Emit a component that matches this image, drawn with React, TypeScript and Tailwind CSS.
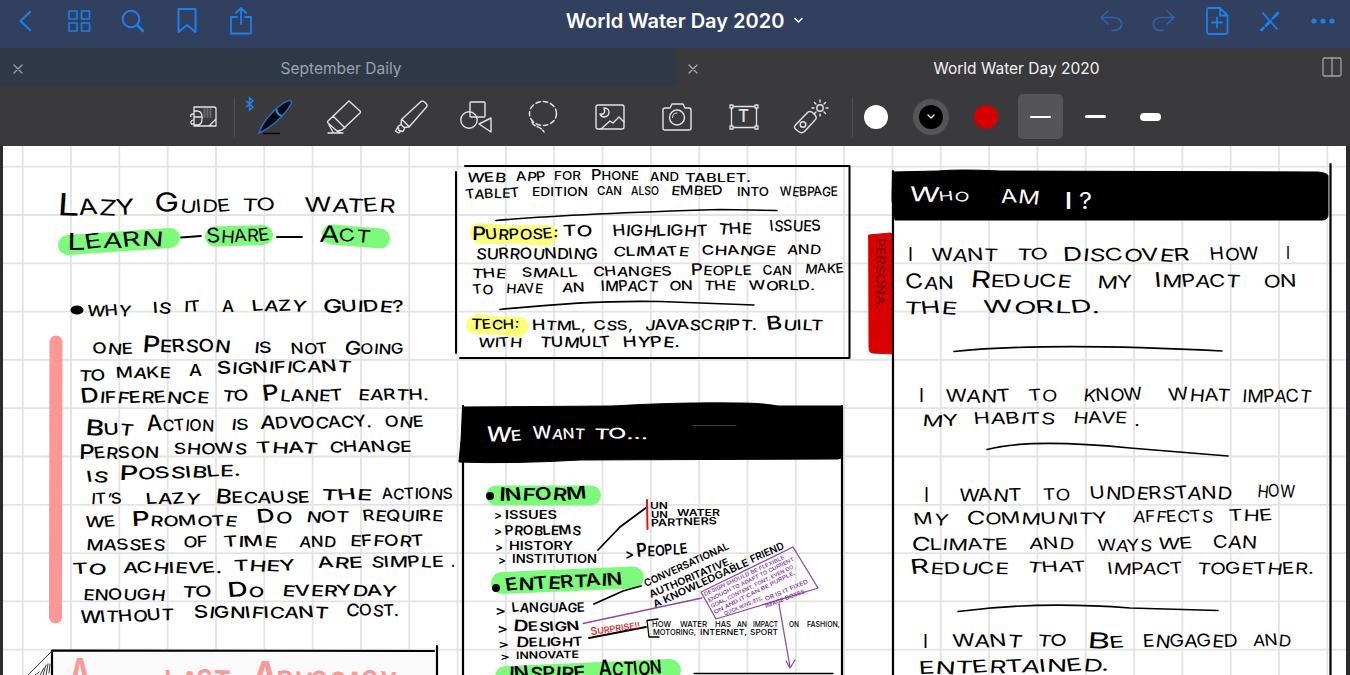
import React from "react";

type Ink = [text: string, x: number, y: number, width: number, cap?: number, capFirst?: number, angle?: number];

const GUIDE: Ink[] = [
  ["LAZY", 57, 215, 78, 15, 21], ["GUIDE", 155, 212, 76, 12, 18], ["TO", 242, 211, 34, 12, 12], ["WATER", 305, 212, 90, 13, 14],
];
const MOTTO: Ink[] = [
  ["LEARN", 67, 250, 96, 14, 16, -3], ["SHARE", 207, 243, 63, 12, 14, -2], ["ACT", 319, 242, 51, 12, 16],
];
const WHY: Ink[] = [
  ["WHY", 87, 316, 44], ["IS", 153, 313, 18], ["IT", 184, 312, 17], ["A", 222, 312, 12], ["LAZY", 252, 311, 54],
  ["GUIDE?", 322, 312, 82, 11, 13],
  ["ONE", 93, 354, 40], ["PERSON", 142, 352, 88, 12, 16], ["IS", 254, 353, 18], ["NOT", 291, 354, 37], ["GOING", 344, 354, 60, 10, 13],
  ["TO", 79, 381, 27], ["MAKE", 116, 378, 55], ["A", 189, 376, 13], ["SIGNIFICANT", 217, 374, 134, 11, 12, -1],
  ["DIFFERENCE", 81, 403, 128, 11, 14], ["TO", 222, 401, 27], ["PLANET", 263, 401, 80, 11, 15], ["EARTH.", 358, 400, 71],
  ["BUT", 85, 435, 48, 11, 15], ["ACTION", 147, 431, 67, 11, 15], ["IS", 231, 430, 18], ["ADVOCACY.", 260, 429, 112, 11, 13, -1], ["ONE", 385, 427, 39],
  ["PERSON", 79, 459, 80, 11, 14, -1], ["SHOWS", 174, 454, 73], ["THAT", 257, 453, 60], ["CHANGE", 329, 452, 83],
  ["IS", 87, 482, 21], ["POSSIBLE.", 119, 480, 122, 11, 14, -2],
  ["IT’S", 91, 504, 31], ["LAZY", 146, 504, 54], ["BECAUSE", 215, 503, 95, 11, 14], ["THE", 321, 500, 51], ["ACTIONS", 382, 499, 71],
  ["WE", 85, 527, 31], ["PROMOTE", 132, 526, 105, 10, 14], ["DO", 257, 523, 35, 11, 13], ["NOT", 306, 522, 43], ["REQUIRE", 363, 521, 80],
  ["MASSES", 86, 550, 79], ["OF", 183, 547, 25], ["TIME", 224, 547, 53], ["AND", 299, 547, 37], ["EFFORT", 350, 546, 74],
  ["TO", 73, 574, 33], ["ACHIEVE.", 123, 573, 99], ["THEY", 234, 571, 62], ["ARE", 318, 568, 45], ["SIMPLE", 371, 567, 73], [".", 451, 567, 4],
  ["ENOUGH", 83, 600, 82], ["TO", 182, 597, 30], ["DO", 228, 597, 36, 10, 14], ["EVERYDAY", 282, 596, 114],
  ["WITHOUT", 80, 623, 94, 11, 12, -2], ["SIGNIFICANT", 194, 618, 134, 11, 12], ["COST.", 346, 616, 53, 11, 12],
];
const PRODUCT: Ink[] = [
  ["WEB", 467, 182, 39, 9], ["APP", 516, 181, 30, 9], ["FOR", 554, 180, 27, 8], ["PHONE", 591, 180, 48, 8, 10], ["AND", 650, 181, 29, 8], ["TABLET.", 685, 182, 66, 8],
  ["TABLET", 466, 199, 54, 9, 9, -2], ["EDITION", 532, 196, 56, 8], ["CAN", 597, 195, 25, 8], ["ALSO", 631, 195, 28, 8], ["EMBED", 671, 195, 52, 9], ["INTO", 737, 196, 32, 8], ["WEBPAGE", 780, 196, 58, 9],
  ["PURPOSE:", 472, 240, 86, 10, 13, -1], ["TO", 563, 236, 29], ["HIGHLIGHT", 613, 236, 95], ["THE", 718, 234, 34], ["ISSUES", 770, 231, 51],
  ["SURROUNDING", 476, 259, 122], ["CLIMATE", 613, 256, 76, 9], ["CHANGE", 702, 255, 74, 9], ["AND", 787, 254, 34, 9],
  ["THE", 472, 278, 34, 9], ["SMALL", 522, 277, 56, 9], ["CHANGES", 593, 276, 79, 9], ["PEOPLE", 691, 275, 61, 9, 11], ["CAN", 763, 275, 29, 9], ["MAKE", 805, 273, 39, 9],
  ["TO", 473, 294, 20, 9], ["HAVE", 506, 293, 37, 9], ["AN", 562, 292, 23, 9], ["IMPACT", 601, 291, 57, 10], ["ON", 669, 290, 24, 9], ["THE", 704, 290, 32, 9], ["WORLD.", 749, 290, 66, 9],
  ["TECH:", 471, 329, 48, 9, 10], ["HTML,", 532, 330, 54, 9, 10], ["CSS,", 594, 330, 39, 9], ["JAVASCRIPT.", 645, 330, 112, 10], ["BUILT", 767, 330, 56, 10, 13],
  ["WITH", 478, 347, 44, 9], ["TUMULT", 540, 347, 71, 10], ["HYPE.", 623, 347, 57, 10],
];
const GOALS: Ink[] = [
  ["INFORM", 499, 501, 88, 12, 13, -1],
  [">", 494, 519, 8, 8], ["ISSUES", 505, 519, 52, 8], [">", 494, 535, 8, 8], ["PROBLEMS", 505, 535, 76, 9],
  [">", 495, 551, 8, 8], ["HISTORY", 509, 550, 64, 8], [">", 498, 564, 8, 8], ["INSTITUTION", 512, 563, 85, 8],
  ["UN", 650, 509, 18, 6.5], ["UN", 651, 517.5, 17, 6], ["WATER", 677, 516, 43, 6.5], ["PARTNERS", 651, 526.5, 66, 7, 7, -2],
  [">", 625, 559, 9, 10], ["PEOPLE", 637, 557, 51, 10, 13, -4],
  ["ENTERTAIN", 506, 591, 117, 12, 12, -3],
  [">", 495, 615, 11, 9], ["LANGUAGE", 512, 612, 73, 9], [">", 497, 633, 11, 9], ["DESIGN", 513, 631, 67, 9, 11],
  [">", 498, 647.5, 11, 8], ["DELIGHT", 516, 647, 67, 8.5, 10, -1], [">", 500, 660, 10, 7], ["INNOVATE", 516, 659, 63, 7, 7, -1],
  ["INSPIRE", 509, 679, 77, 12], ["ACTION", 599, 676, 63, 13, 15, -2],
  ["CONVERSATIONAL", 646, 587, 92, 7, 7, -24.6], ["AUTHORITATIVE.", 651, 598, 89, 7, 7, -23], ["A KNOWLEDGABLE", 655, 608, 104, 7, 7, -24.5], ["FRIEND", 752, 563, 36, 7, 7, -24],
];
const DELIGHT: Ink[] = [
  ["HOW", 652, 627, 19, 5], ["WATER", 680, 627, 27, 5], ["HAS", 715, 627, 16, 5], ["AN", 737, 627, 10, 5], ["IMPACT", 753, 627, 25, 5], ["ON", 789, 627, 10, 5], ["FASHION,", 807, 627, 33, 5],
  ["MOTORING,", 653, 635, 43, 5], ["INTERNET,", 700, 635, 47, 5], ["SPORT", 750, 635, 28, 5],
];
const NOTE: Ink[] = [
  ["DESIGN SHOULD BE FLEXIBLE", 705, 596, 88, 3.6, 3.6, -25], ["ENOUGH TO ADAPT TO CURRENT", 709, 602, 95, 3.6, 3.6, -26], ["GOAL, CONTENT, FONT, EVEN DO", 712, 608, 91, 3.6, 3.6, -26],
  ["ON AND IT CAN BE PURPLE,", 715, 614, 90, 3.6, 3.6, -26.5], ["QUICK WINS, ETC.", 725, 615.5, 42, 3.6, 3.6, -23],
  ["OR IS IT FIXED", 766, 601, 46, 4, 4, -23], ["IMAGE BOXES", 766, 608, 42, 4, 4, -21],
];
const PERSONA: Ink[] = [
  ["I", 908, 261, 5, 13], ["WANT", 932, 261, 66, 12], ["TO", 1017, 260, 32, 11], ["DISCOVER", 1063, 261, 127, 12, 13], ["HOW", 1210, 260, 49, 12], ["I", 1286, 259, 4, 12],
  ["CAN", 906, 289, 48, 12, 14], ["REDUCE", 970, 287, 101, 12, 16], ["MY", 1097, 288, 36, 12], ["IMPACT", 1155, 287, 85, 12, 14], ["ON", 1263, 287, 34, 12],
  ["THE", 904, 314, 53, 12], ["WORLD.", 984, 313, 116, 12],
  ["I", 919, 402, 5, 13], ["WANT", 946, 402, 65, 12], ["TO", 1029, 401, 28, 11], ["KNOW", 1083, 401, 60, 12], ["WHAT", 1169, 401, 61, 12], ["IMPACT", 1242, 402, 69, 12],
  ["MY", 922, 426, 37, 11], ["HABITS", 974, 424, 81, 11], ["HAVE", 1073, 423, 54, 11], [".", 1134, 426, 6, 11],
  ["I", 924, 502, 5, 14], ["WANT", 959, 501, 63, 12], ["TO", 1043, 500, 27, 11], ["UNDERSTAND", 1090, 499, 142, 12], ["HOW", 1257, 497, 38, 12],
  ["MY", 914, 525, 34, 11], ["COMMUNITY", 966, 524, 142, 11, 13], ["AFFECTS", 1133, 522, 80, 11], ["THE", 1229, 521, 44, 11],
  ["CLIMATE", 911, 550, 97, 11, 13], ["AND", 1029, 549, 45, 11], ["WAYS", 1098, 551, 54, 11], ["WE", 1158, 549, 35, 11], ["CAN", 1213, 548, 44, 12],
  ["REDUCE", 911, 574, 98, 11, 14], ["THAT", 1027, 572, 60, 10], ["IMPACT", 1108, 574, 75, 11], ["TOGETHER.", 1197, 574, 117, 11],
  ["I", 923, 648, 5, 13], ["WANT", 953, 647, 69, 12], ["TO", 1037, 646, 30, 11], ["BE", 1087, 648, 38, 11, 15], ["ENGAGED", 1143, 647, 95, 12], ["AND", 1253, 646, 38, 11],
  ["ENTERTAINED.", 919, 674, 190, 12, 12, -1],
];

// Per-letter tilt, so that a row of capitals looks pen-written.
const TILT = [3, -5, 4, -3, 6, -4, 2, -6, 5, -2, 4];

function Writing({ words, className = "fill-black font-medium" }: { words: Ink[]; className?: string }) {
  return (
    <g className={className}>
      {words.map(([text, x, y, width, cap = 10.5, capFirst = cap, angle = 0], i) => (
        <text
          key={i}
          x={x}
          y={y}
          fontSize={cap / 0.69}
          textLength={width}
          lengthAdjust="spacingAndGlyphs"
          transform={angle ? `rotate(${angle} ${x} ${y})` : undefined}
          rotate={cap > 8 && text.length > 1 ? Array.from(text, (_, n) => TILT[(i * 3 + n) % TILT.length]).join(" ") : undefined}
        >
          {capFirst === cap ? text : (
            <>
              <tspan fontSize={capFirst / 0.69}>{text[0]}</tspan>
              {text.slice(1)}
            </>
          )}
        </text>
      ))}
    </g>
  );
}

function Glyph({ w, h, className, sw = 1.5, children }: { w: number; h: number; className?: string; sw?: number; children: React.ReactNode }) {
  return (
    <svg width={w} height={h} viewBox={`0 0 ${w} ${h}`} className={className} fill="none" stroke="currentColor" strokeWidth={sw} strokeLinecap="round" strokeLinejoin="round">
      {children}
    </svg>
  );
}

const Slot = ({ children }: { children: React.ReactNode }) => <button className="flex h-full w-[67px] items-center justify-center">{children}</button>;
const Left = ({ children }: { children: React.ReactNode }) => <button className="flex w-[54px] items-center justify-center">{children}</button>;
const Right = ({ children, dim }: { children: React.ReactNode; dim?: boolean }) => (
  <button className={dim ? "flex w-[53px] items-center justify-center text-[#2767b2]" : "flex w-[53px] items-center justify-center"}>{children}</button>
);
const Swatch = ({ children }: { children: React.ReactNode }) => <button className="flex h-full w-[55px] items-center justify-center">{children}</button>;

function TitleBar() {
  return (
    <header className="grid h-12 grid-cols-[1fr_auto_1fr] items-center bg-[#31405f] pb-[7px] text-[#1b7fee]">
      <nav className="-ml-[2px] flex h-10 items-center">
        <Left><Glyph w={14} h={24} sw={2.2}><path d="M12 3 2.5 12 12 21" /></Glyph></Left>
        <Left><Glyph w={24} h={24} sw={1.6}><path d="M2 2h8v8H2zM14.500 2h8v8h-8zM2 14h8v8H2zM14.500 14h8v8h-8z" /></Glyph></Left>
        <Left><Glyph w={24} h={24} sw={2}><circle cx="10" cy="10" r="8.300" /><path d="m16 16 6 6" strokeWidth="2.600" /></Glyph></Left>
        <Left><Glyph w={20} h={26} sw={2}><path d="M1.500 1h17v23L10 17l-8.500 7z" /></Glyph></Left>
        <Left><Glyph w={24} h={28} sw={1.8}><path d="M8 10H2v16.500h20V10h-6M12 17V1M6.800 6 12 1l5.200 5" /></Glyph></Left>
      </nav>
      <h1 className="flex items-center gap-[10px] pl-[19px] text-[20px] leading-none font-semibold text-white">
        <span className="whitespace-nowrap">World Water Day 2020</span>
        <Glyph w={9} h={7} sw={1.5}><path d="M1 1.500 4.500 5 8 1.500" /></Glyph>
      </h1>
      <nav className="flex h-10 items-center justify-end pr-px">
        <Right dim><Glyph w={24} h={24} sw={1.6}><path d="M9 2 2 8.500 9 15M2 8.500h12c5 0 8.500 2.500 8.500 6.500S20 21.500 15 21.500h-2" /></Glyph></Right>
        <Right dim><Glyph w={24} h={24} sw={1.6}><path d="m15 2 7 6.500L15 15M22 8.500H10c-5 0-8.500 2.500-8.500 6.500S4 21.500 9 21.500h2" /></Glyph></Right>
        <Right><Glyph w={24} h={28} sw={1.8}><path d="M4 1h11l7.500 7.500V25a2 2 0 0 1-2 2H4a2 2 0 0 1-2-2V3a2 2 0 0 1 2-2ZM15 1v7.500h7.500M12 10.500v10M7 15.500h10" /></Glyph></Right>
        <Right><Glyph w={22} h={22} sw={1.8}><path d="m4 3 14 16M2.500 20l2-2M7 15.500l5-5M13.500 8.500 19 3" /><path d="m2.500 20 2-2M7 15.500l3-3M15 7l4-4" strokeWidth="2.800" /></Glyph></Right>
        <Right><svg width="24" height="6" className="fill-current"><circle cx="3" cy="3" r="2.600" /><circle cx="12" cy="3" r="2.600" /><circle cx="21" cy="3" r="2.600" /></svg></Right>
      </nav>
    </header>
  );
}

function Tabs() {
  return (
    <div className="flex h-[38px] bg-[#3a393b] text-[15.500px] leading-none">
      <div className="flex w-[676px] items-center bg-[#2f3847] pt-1 pl-[13px] text-[#9ba0b2]">
        <Glyph w={10} h={10} sw={1.3}><path d="m1 1 8 8M9 1 1 9" /></Glyph>
        <span className="flex-1 pr-[17px] text-center">September Daily</span>
      </div>
      <div className="flex flex-1 items-center pt-1 pr-2 pl-[12px] text-[#f4f4f5]">
        <Glyph w={10} h={10} sw={1.3} className="text-[#a8a8aa]"><path d="m1 1 8 8M9 1 1 9" /></Glyph>
        <span className="flex-1 pl-[13px] text-center">World Water Day 2020</span>
        <Glyph w={20} h={20} sw={1.3} className="-mt-1 text-[#a3a3a6]"><rect x="1" y="1" width="18" height="18" rx="1.500" /><path d="M10 1v18" /></Glyph>
      </div>
    </div>
  );
}

function Toolbar() {
  return (
    <div className="flex h-[60px] items-center bg-[#3a393b] pt-px pl-[190px] text-[#e4e4e5]">
      <Glyph w={28} h={22} sw={1.3}>
        <path d="M4 1h20a2 2 0 0 1 2 2v17H4zM19 20l7-7M4 5h3q5 0 5 6v2q0 6-5 6H4M4 11h8M3 8Q0 8 1 10.500M3 14q-3 1-1.500 4H4" />
        <path d="M14 3h9M14 5h9M14 7h9M14 9h9M14 11h9" strokeWidth=".6" strokeDasharray="1 2" />
      </Glyph>
      <div className="ml-[16px] h-10 w-px bg-[#505052]" />
      <div className="ml-[6px] flex h-full items-center">
        <Slot>
          <svg width="50" height="42" viewBox="0 0 50 42" fill="none" className="-ml-3">
            <path d="m2 5 7 6-3.500 3V2L9 5l-7 6" stroke="#2080ee" strokeWidth="1.500" />
            <path d="M15 37C18 27 28 15 38 8c6-4 11-5 9 0-6 11-20 24-32 29Z" fill="#05070b" stroke="#1c72d6" strokeWidth="1.500" />
            <path d="M32.500 13c0 4 2 6 5.500 7" stroke="#2b8cf5" strokeWidth="2" />
            <path d="M19 37.500h17" stroke="#080808" strokeWidth="1.500" />
          </svg>
        </Slot>
        <Slot><Glyph w={38} h={36} sw={1.4} className="ml-1"><path d="m24 2 11 10q1 1 0 2L17 31l-5 1-9-8q-1-1 0-2ZM8 17l12 12M3 34h15M4 26l4 7M12 32l4 2" /></Glyph></Slot>
        <Slot><Glyph w={34} h={34} sw={1.4} className="ml-1"><path d="M27 1.500q2-1 3.500.500l2 2q1 1.500 0 3L15 27l-5 .500-3-3 .500-5ZM8 19.500l7 7M7.500 24 4 26.500l1 4 4 1 2-4M4 27l-2.500 4 3 2 2-1.500" /></Glyph></Slot>
        <Slot><Glyph w={32} h={32} sw={1.4}><rect x="10" y="1" width="15" height="15" rx="1" /><circle cx="9" cy="19" r="8.200" /><path d="m19 23 12-6v14Z" /></Glyph></Slot>
        <Slot><Glyph w={30} h={34} sw={1.5} className="ml-px"><ellipse cx="15" cy="13.500" rx="13.500" ry="12" strokeDasharray="4.500 3" /><path d="M4 22c2 6 8 3 12 10" strokeDasharray="5 2" /></Glyph></Slot>
        <Slot><Glyph w={30} h={26} sw={1.4}><rect x="1" y="1" width="28" height="24" rx="2" /><path d="m6 25 9-8 3 2 6-6 5 5M9 4c2 5-1 7-4 6 2 5 9 3 9-2 0-3-3-4-5-4Z" /></Glyph></Slot>
        <Slot><Glyph w={30} h={28} sw={1.4}><path d="M3 5h5l2-4h11l2 4h4q2 0 2 2v18q0 2-2 2H3q-2 0-2-2V7q0-2 2-2Z" /><circle cx="15" cy="14.500" r="7.500" /><path d="M10.500 14.500q0-4.500 4.500-4.500" strokeWidth="1" /></Glyph></Slot>
        <Slot>
          <span className="relative flex h-[26px] w-[30px] items-center justify-center text-[17px] font-medium">
            <Glyph w={30} h={26} sw={1.3} className="absolute inset-0"><path d="M4 2.500h22M4 23.500h22M2.500 4v18M27.500 4v18M1 1h3v3H1zM26 1h3v3h-3zM1 22h3v3H1zM26 22h3v3h-3z" /></Glyph>
            T
          </span>
        </Slot>
        <Slot><Glyph w={36} h={36} sw={1.4} className="ml-px"><path d="M2.500 26 14 14q3-3 6 0l2 2q2.500 3 0 5L11.500 32.500q-3 2.500-6 0l-3-2.500q-2-2 0-4Z" /><circle cx="10" cy="25.500" r="2.800" /><circle cx="27" cy="9" r="3.200" /><path d="M27 1v2M27 15v2M19 9h2M33 9h2M21.500 3.500l1.400 1.400M31 13l1.500 1.500M32.500 3.500 31 5M21 15l2-2" /></Glyph></Slot>
      </div>
      <div className="ml-[8px] h-10 w-px bg-[#505052]" />
      <button className="mr-[5px] ml-px flex w-[44px] justify-center"><span className="size-6 rounded-full bg-white" /></button>
      <Swatch>
        <span className="flex size-9 items-center justify-center rounded-full bg-[#555557]">
          <span className="flex size-6 items-center justify-center rounded-full bg-black text-white"><Glyph w={8} h={6} sw={1.3}><path d="m1 1 3 3 3-3" /></Glyph></span>
        </span>
      </Swatch>
      <Swatch><span className="size-6 rounded-full bg-[#d40000]" /></Swatch>
      <Swatch><span className="flex size-[45px] items-center justify-center rounded-[5px] bg-[#555557]"><span className="h-[2px] w-[21px] rounded-full bg-white" /></span></Swatch>
      <Swatch><span className="h-[3px] w-[21px] rounded-full bg-white" /></Swatch>
      <Swatch><span className="h-2 w-[21px] rounded-full bg-white" /></Swatch>
    </div>
  );
}

const GRID_X = Array.from({ length: 28 }, (_, i) => 22.7 + i * 48.32);
const GRID_Y = Array.from({ length: 11 }, (_, i) => 166.7 + i * 48.3);

function Notebook() {
  return (
    <main className="h-[529px] border-r-4 border-l-3 border-[#2b2b2e] bg-white">
      <svg width="1343" height="529" viewBox="3 146 1343 529" fill="none" strokeLinecap="round" strokeLinejoin="round" className="block font-[Inter,sans-serif]">
        <g stroke="#e3e3e3" strokeWidth="1.800">
          {GRID_X.map((x) => <path key={x} d={`M${x} 146V675`} />)}
          {GRID_Y.map((y) => <path key={y} d={`M3 ${y}H1346`} />)}
        </g>

        <g stroke="#7dfa7b" strokeWidth="20">
          <path d="M68 245 170 238" /><path d="M215 236.500 263 235" /><path d="M332 234.500 380 238.500" />
          <path d="M496 495.500H591" /><path d="M502 583 633 577.500" strokeWidth="22" /><path d="M506 677 670 670" strokeWidth="22" />
        </g>
        <g stroke="#fbff7c" strokeWidth="18"><path d="M480 235 549 234M479 232 546 237" /><path d="M475 325 520 326M478 323 518 328" /></g>
        <path d="M56 342 55.500 617" stroke="#fc9795" strokeWidth="13" />

        <Writing words={GUIDE} className="fill-black font-normal" />
        <Writing words={MOTTO} className="fill-black font-normal" />
        <Writing words={WHY} />
        <ellipse cx="77" cy="310" rx="6.500" ry="4.500" fill="#000" />
        <path d="M181 237.500 201 236M277 237h25" stroke="#000" strokeWidth="1.800" />

        <path d="M52 651V680H437V651Z" fill="#fafafa" />
        <path d="M52 680V650.500L434 651M437 646v34" stroke="#000" strokeWidth="2.200" />
        <path d="M28 675 52 651M37 674l2-2M40 675l4-7M43 675l3-10M46 675l2-11M49 673l1-9M35 675l1-1" stroke="#222" strokeWidth=".9" />
        <Writing words={[["A", 69, 688, 22, 28], ["LAST", 165, 690, 65, 19], ["ADVOCACY", 251, 690, 145, 18, 28]]} className="fill-[#f99a98] font-bold" />

        <g stroke="#000" strokeWidth="2">
          <path d="M456 172V353M465 166H849.500V358H460" />
          <path d="M496 220.500Q570 214 720 209.500L777 210.500M500 309.500Q590 300 660 301.500L754 305" strokeWidth="1.700" />
        </g>
        <Writing words={PRODUCT} />

        <path d="M463 406V675M842 406V675" stroke="#000" strokeWidth="2.200" />
        <path d="M463 407 612 406Q680 402 740 403 762 403 778 406L842 406V455Q842 459 838 459L580 460Q510 464 459 462L461 440Z" fill="#000" stroke="#000" />
        <path d="M693 425.500H736" stroke="#555" strokeWidth=".8" />
        <Writing words={[["WE", 486, 441, 36, 10, 14], ["WANT", 533, 439, 52, 10, 12], ["TO...", 594, 439, 54, 10]]} className="fill-white font-medium" />
        <Writing words={GOALS} className="fill-black font-semibold" />
        <Writing words={DELIGHT} />
        <circle cx="490" cy="496" r="4" fill="#000" /><circle cx="496" cy="588" r="4" fill="#000" />
        <g stroke="#000" strokeWidth="1.800">
          <path d="M598 550 620 527 647 507M594 604 623 591 641 586M589 638 646 627" />
          <path d="M658 619 647 620.500 649 637H659M694 673.500H833" strokeWidth="1.300" />
        </g>
        <path d="M647 500 647.500 529" stroke="#e01515" strokeWidth="2" />
        <Writing words={[["SURPRISE!!", 591, 635, 50, 6, 7, -8]]} className="fill-[#e01515] font-medium" />
        <path d="M583 623.500 702 598M701 592 793 547 818 588 716 619ZM779 604 790 667M786 661 790 668 795 660" stroke="#8d4aa5" strokeWidth="1.300" />
        <Writing words={NOTE} className="fill-[#7a2796] font-medium" />

        <path d="M869 235 890 233 893 234V354L873 353Q869 353 869 348Z" fill="#d90000" stroke="#d90000" />
        <Writing words={[["PERSONA.", 876, 238, 71, 8, 8, 90]]} className="fill-[#650000] font-normal" />
        <path d="M893 171V675M1330.500 164V675" stroke="#000" strokeWidth="2.200" />
        <path d="M893 172 938 171Q960 169 1000 171L1318 172Q1328 173 1328 176V214Q1328 220 1322 220L895 220 892 200Z" fill="#000" stroke="#000" />
        <Writing words={[["WHO", 909, 201, 60, 9, 14], ["AM", 1001, 203, 38, 13], ["I", 1064, 209, 9, 16], ["?", 1079, 209, 13, 16]]} className="fill-white font-normal" />
        <Writing words={PERSONA} className="fill-black font-normal" />
        <g stroke="#000" strokeWidth="1.700">
          <path d="M954 351.500Q1045 342 1222 351M987 449.500Q1030 438 1130 448L1228 456M958 611.500Q1037 601 1130 608L1218 610.500" />
        </g>
      </svg>
    </main>
  );
}

export default function App() {
  return (
    <div className="h-[675px] w-[1350px] overflow-hidden bg-[#3a393b] font-[Inter,sans-serif]">
      <TitleBar />
      <Tabs />
      <Toolbar />
      <Notebook />
    </div>
  );
}
